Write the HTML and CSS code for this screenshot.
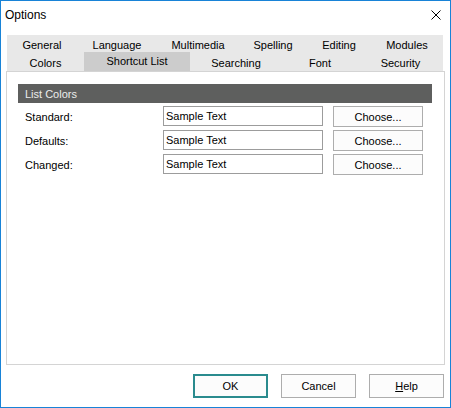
FILE: index.html
```html
<!DOCTYPE html>
<html>
<head>
<meta charset="utf-8">
<link rel="stylesheet" href="styles.css">
</head>
<body>
<div class="window">
  <div class="titlebar">
    <span class="title">Options</span>
    <svg class="close" width="10" height="10" viewBox="0 0 10 10"><path d="M0.5 0.5 L9.5 9.5 M9.5 0.5 L0.5 9.5" stroke="#000" stroke-width="1" fill="none"/></svg>
  </div>
  <div class="tabs">
    <div class="tabrow row1">
      <div class="tab">General</div>
      <div class="tab">Language</div>
      <div class="tab">Multimedia</div>
      <div class="tab">Spelling</div>
      <div class="tab">Editing</div>
      <div class="tab">Modules</div>
    </div>
    <div class="tabrow row2">
      <div class="tab">Colors</div>
      <div class="tab selected">Shortcut List</div>
      <div class="tab">Searching</div>
      <div class="tab">Font</div>
      <div class="tab">Security</div>
    </div>
  </div>
  <div class="panel">
    <div class="group-header">List Colors</div>
    <div class="rows">
      <div class="row">
        <span class="label">Standard:</span>
        <div class="field">Sample Text</div>
        <div class="btn choose">Choose...</div>
      </div>
      <div class="row">
        <span class="label">Defaults:</span>
        <div class="field">Sample Text</div>
        <div class="btn choose">Choose...</div>
      </div>
      <div class="row">
        <span class="label">Changed:</span>
        <div class="field">Sample Text</div>
        <div class="btn choose">Choose...</div>
      </div>
    </div>
  </div>
  <div class="footer">
    <div class="btn big default">OK</div>
    <div class="btn big">Cancel</div>
    <div class="btn big"><u>H</u>elp</div>
  </div>
</div>
</body>
</html>
```
FILE: styles.css
```css
* { box-sizing: border-box; }
html, body { margin: 0; padding: 0; background: #fff; }
body {
  font-family: "Liberation Sans", Arial, sans-serif;
  font-size: 11px;
  color: #000;
}
.window {
  width: 451px;
  height: 408px;
  border: 1px solid #1883d7;
  background: #fff;
  display: flex;
  flex-direction: column;
}
.titlebar {
  height: 26px;
  display: flex;
  align-items: center;
  justify-content: space-between;
  padding: 0 9px 0 4px;
}
.title {
  font-size: 12px;
  padding-top: 1px;
}
.close { display: block; margin-top: 1px; }
.tabs {
  margin: 8px 0 0 6px;
  width: 436px;
  background: #e8e8e8;
  display: flex;
  flex-direction: column;
}
.tabrow { display: grid; }
.row1 { grid-template-columns: 70px 80px 82px 68px 64px 72px; height: 17px; }
.row2 { grid-template-columns: 77px 106px 92px 76px 85px; height: 19px; }
.tab {
  display: flex;
  align-items: center;
  justify-content: center;
  line-height: 1;
}
.row1 .tab { padding-top: 3px; }
.row2 .tab { padding-top: 3px; }
.tab.selected { background: #cccccc; padding-top: 1px; padding-bottom: 1px; }
.panel {
  margin-left: 5px;
  width: 439px;
  height: 294px;
  border: 1px solid #d4d4d4;
  padding: 12px 12px 0 11px;
}
.group-header {
  height: 19px;
  background: #5e5f5e;
  color: #ececec;
  padding-left: 7px;
  display: flex;
  align-items: center;
}
.rows {
  margin-top: 3px;
  display: flex;
  flex-direction: column;
  gap: 3px;
}
.row {
  display: flex;
  align-items: flex-start;
  height: 21px;
}
.label {
  width: 145px;
  padding-left: 7px;
  padding-top: 5px;
}
.field {
  width: 160px;
  height: 20px;
  border: 1px solid #9c9c9c;
  padding: 3px 0 0 2px;
  background: #fff;
}
.btn {
  display: flex;
  align-items: center;
  justify-content: center;
  border: 1px solid #adadad;
  background: #fcfcfc;
}
.choose {
  width: 90px;
  height: 21px;
  margin-left: 10px;
}
.footer {
  display: flex;
  justify-content: flex-end;
  gap: 13px;
  padding: 9px 6px 0 0;
}
.big { width: 75px; height: 24px; }
.default { border: 2px solid #2a8b8e; }
```
